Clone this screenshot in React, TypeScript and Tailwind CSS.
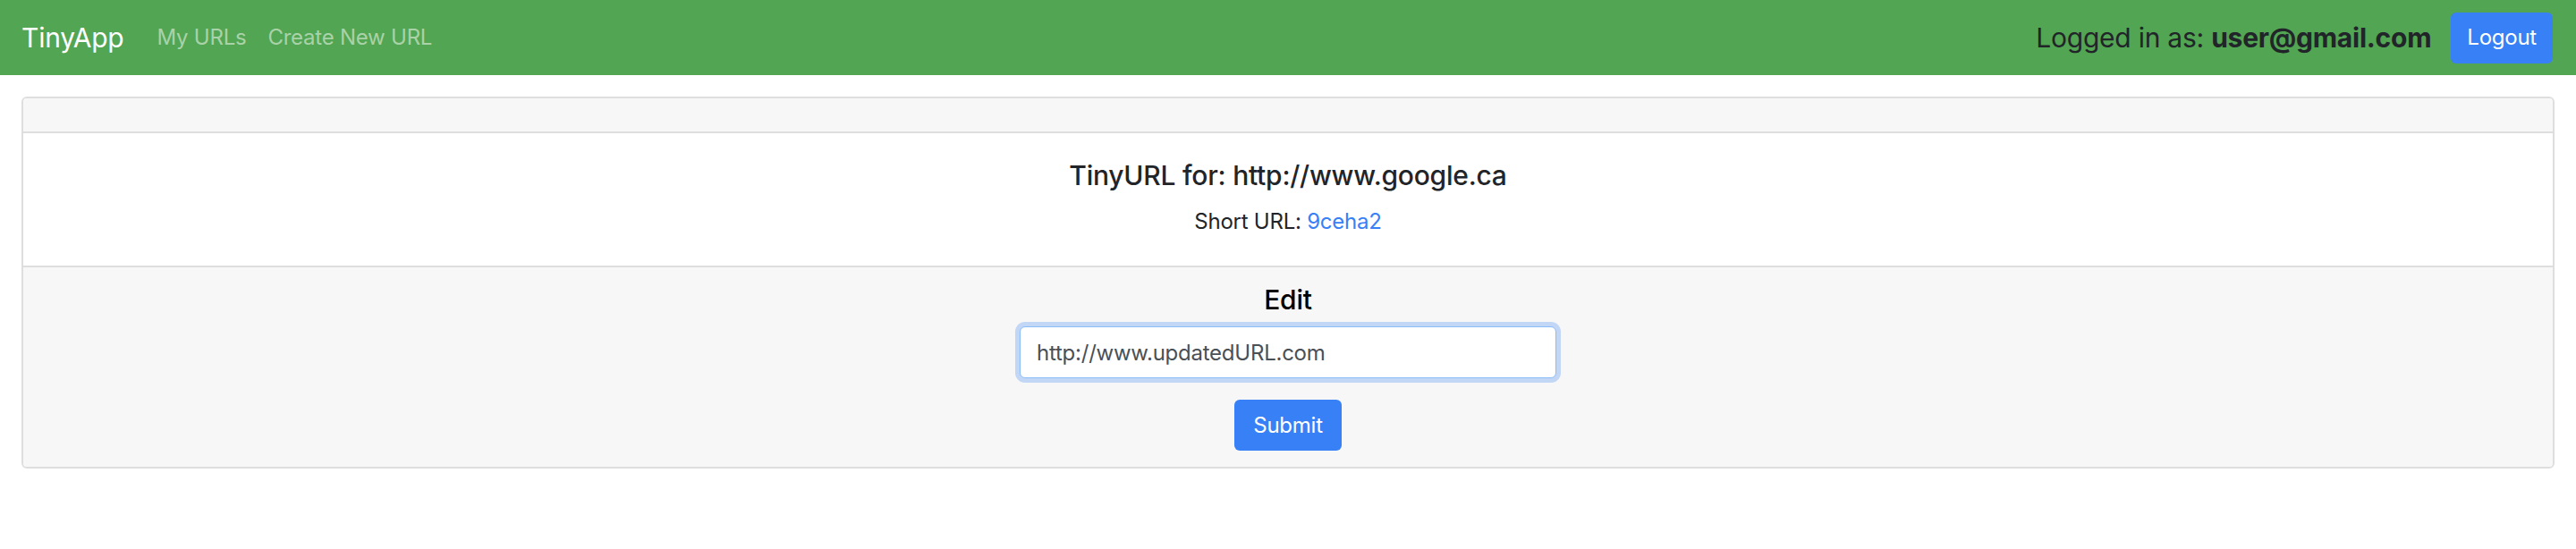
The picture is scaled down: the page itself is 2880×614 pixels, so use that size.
import React from "react";

export default function App() {
  const font = { fontFamily: "Inter, 'Noto Sans', sans-serif" };
  return (
    <div className="min-h-[614px] w-full bg-white tracking-[-0.015em] text-[#212529]" style={font}>
      <nav className="flex h-[84px] items-center justify-between bg-[#52a552] pl-[24px] pr-[26px]">
        <div className="flex items-center">
          <a className="mr-[25px] text-[30px] leading-[45px] text-white">TinyApp</a>
          <a className="px-[12px] text-[24px] leading-[36px] text-[#a9d2a9]">My URLs</a>
          <a className="px-[12px] text-[24px] leading-[36px] text-[#a9d2a9]">Create New URL</a>
        </div>
        <div className="flex items-center gap-[22px]">
          <span className="text-[30px] leading-[36px] text-[#212529]">
            Logged in as: <b className="font-bold">user@gmail.com</b>
          </span>
          <button className="h-[57px] rounded-[6px] bg-[#3880f6] px-[18px] text-[24px] leading-[36px] text-white">
            Logout
          </button>
        </div>
      </nav>
      <div className="mx-[24px] mt-[24px] overflow-hidden rounded-[6px] border-2 border-[#dedede]">
        <div className="h-[39px] border-b-2 border-[#dedede] bg-[#f7f7f7]" />
        <div className="flex flex-col items-center bg-white pb-[31px] pt-[29px]">
          <h5 className="mb-[16px] text-[30px] font-medium leading-[36px] text-[#212529]">
            TinyURL for: http://www.google.ca
          </h5>
          <p className="text-[24px] leading-[36px]">
            Short URL: <a className="text-[#3880f6]">9ceha2</a>
          </p>
        </div>
        <div className="flex flex-col items-center border-t-2 border-[#dedede] bg-[#f7f7f7] pb-[18px] pt-[18px]">
          <label className="mb-[12px] text-[30px] font-medium leading-[36px] text-black">Edit</label>
          <input
            readOnly
            value="http://www.updatedURL.com"
            className="h-[58px] w-[600px] rounded-[6px] border-[1.5px] border-[#8bbdf8] bg-white px-[18px] text-[24px] text-[#495057] shadow-[0_0_0_5px_rgba(56,128,246,0.28)] outline-none"
          />
          <button className="mt-[24px] h-[57px] w-[120px] rounded-[6px] bg-[#3880f6] text-[24px] leading-[36px] text-white">
            Submit
          </button>
        </div>
      </div>
    </div>
  );
}
